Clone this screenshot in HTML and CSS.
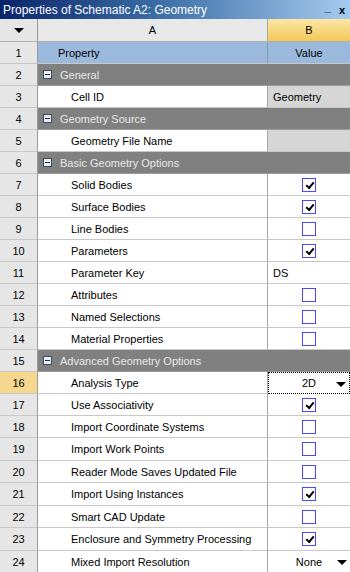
FILE: index.html
```html
<!DOCTYPE html>
<html>
<head>
<meta charset="utf-8">
<link rel="stylesheet" href="styles.css">
</head>
<body>
<div class="panel">
  <div class="titlebar">
    <span class="title">Properties of Schematic A2: Geometry</span>
    <span class="winbtns"><span class="min">_</span><span class="close">x</span></span>
  </div>
  <div class="row head">
    <div class="num"><span class="tri"></span></div>
    <div class="colA">A</div>
    <div class="colB">B</div>
  </div>
  <div class="row hdr"><div class="num">1</div><div class="a prop">Property</div><div class="b center">Value</div></div>
  <div class="row group"><div class="num">2</div><div class="g"><span class="minus"></span>General</div></div>
  <div class="row"><div class="num">3</div><div class="a">Cell ID</div><div class="b ro">Geometry</div></div>
  <div class="row group"><div class="num">4</div><div class="g"><span class="minus"></span>Geometry Source</div></div>
  <div class="row"><div class="num">5</div><div class="a">Geometry File Name</div><div class="b ro"></div></div>
  <div class="row group"><div class="num">6</div><div class="g"><span class="minus"></span>Basic Geometry Options</div></div>
  <div class="row"><div class="num">7</div><div class="a">Solid Bodies</div><div class="b center"><span class="cb on"></span></div></div>
  <div class="row"><div class="num">8</div><div class="a">Surface Bodies</div><div class="b center"><span class="cb on"></span></div></div>
  <div class="row"><div class="num">9</div><div class="a">Line Bodies</div><div class="b center"><span class="cb"></span></div></div>
  <div class="row"><div class="num">10</div><div class="a">Parameters</div><div class="b center"><span class="cb on"></span></div></div>
  <div class="row"><div class="num">11</div><div class="a">Parameter Key</div><div class="b">DS</div></div>
  <div class="row"><div class="num">12</div><div class="a">Attributes</div><div class="b center"><span class="cb"></span></div></div>
  <div class="row"><div class="num">13</div><div class="a">Named Selections</div><div class="b center"><span class="cb"></span></div></div>
  <div class="row"><div class="num">14</div><div class="a">Material Properties</div><div class="b center"><span class="cb"></span></div></div>
  <div class="row group"><div class="num">15</div><div class="g"><span class="minus"></span>Advanced Geometry Options</div></div>
  <div class="row"><div class="num sel">16</div><div class="a">Analysis Type</div><div class="b center drop focus">2D<span class="dtri"></span></div></div>
  <div class="row"><div class="num">17</div><div class="a">Use Associativity</div><div class="b center"><span class="cb on"></span></div></div>
  <div class="row"><div class="num">18</div><div class="a">Import Coordinate Systems</div><div class="b center"><span class="cb"></span></div></div>
  <div class="row tall"><div class="num">19</div><div class="a">Import Work Points</div><div class="b center"><span class="cb"></span></div></div>
  <div class="row"><div class="num">20</div><div class="a">Reader Mode Saves Updated File</div><div class="b center"><span class="cb"></span></div></div>
  <div class="row tall"><div class="num">21</div><div class="a">Import Using Instances</div><div class="b center"><span class="cb on"></span></div></div>
  <div class="row"><div class="num">22</div><div class="a">Smart CAD Update</div><div class="b center"><span class="cb"></span></div></div>
  <div class="row tall"><div class="num">23</div><div class="a">Enclosure and Symmetry Processing</div><div class="b center"><span class="cb on"></span></div></div>
  <div class="row"><div class="num">24</div><div class="a">Mixed Import Resolution</div><div class="b center drop">None<span class="dtri"></span></div></div>
</div>
</body>
</html>
```

FILE: styles.css
```css
* { box-sizing: border-box; }
html, body { margin: 0; padding: 0; background: #ffffff; }
body { font-family: "Liberation Sans", Arial, sans-serif; font-size: 11px; color: #000; }
.panel { width: 350px; height: 572px; overflow: hidden; background: #fff; }

.titlebar {
  height: 19px;
  background: linear-gradient(to right, #0a246a 0%, #3a6ea5 45%, #a6caf0 100%);
  color: #fff;
  display: flex;
  align-items: center;
  justify-content: space-between;
  padding: 0 5px 0 3px;
  font-size: 12px;
}
.winbtns { display: flex; gap: 8px; color: #000; font-weight: bold; font-size: 11px; }
.min { position: relative; top: -3px; }

.row {
  display: grid;
  grid-template-columns: 38px 230px 82px;
  height: 22px;
}
.row.tall { height: 23px; }
.row > div {
  border-bottom: 1px solid #c8c8c8;
  display: flex;
  align-items: center;
  white-space: nowrap;
  overflow: hidden;
}
.num {
  justify-content: center;
  background: #e6e6e6;
  border-right: 1px solid #9a9a9a;
}
.num.sel { background: #f5d78e; }
.a { padding-left: 33px; border-right: 1px solid #a8a8a8; }
.b { padding-left: 5px; }
.center { justify-content: center; padding-left: 0; }

.head { height: 23px; }
.head > div { border-bottom: 1px solid #b0b0b0; justify-content: center; }
.colA { background: #e8e8e8; border-right: 1px solid #a8a8a8; }
.colB { background: linear-gradient(to bottom, #fbe7a8, #f3c857); }
.tri { width: 0; height: 0; border-left: 5px solid transparent; border-right: 5px solid transparent; border-top: 5px solid #000; }

.hdr .a, .hdr .b { background: #9bb9dd; }
.hdr .a { padding-left: 20px; border-right-color: #8899aa; }

.group .g {
  grid-column: 2 / 4;
  background: #808080;
  color: #e8e8e8;
  padding-left: 5px;
  border-bottom: 1px solid #9a9a9a;
}
.minus {
  width: 9px; height: 9px;
  background: #e8eef6;
  border: 1px solid #404a5a;
  margin-right: 8px;
  position: relative;
}
.minus::after {
  content: "";
  position: absolute;
  left: 1px; top: 3px;
  width: 5px; height: 1px;
  background: #20304a;
}

.ro { background: #d6d6d6; }

.cb {
  width: 14px; height: 14px;
  border: 1px solid #4848ff;
  background: #fff;
  position: relative;
}
.cb.on::after {
  content: "";
  position: absolute;
  left: 3px; top: 1px;
  width: 6px; height: 3px;
  border-left: 2px solid #000;
  border-bottom: 2px solid #000;
  transform: translate(0, 2px) rotate(-50deg);
  transform-origin: center;
}

.drop { position: relative; }
.dtri {
  position: absolute;
  right: 3px; top: 9px;
  width: 0; height: 0;
  border-left: 5px solid transparent; border-right: 5px solid transparent; border-top: 5px solid #000;
}
.row > .focus {
  outline: 1px dotted #000;
  outline-offset: -1px;
  border: 1px dotted #000;
}
```
